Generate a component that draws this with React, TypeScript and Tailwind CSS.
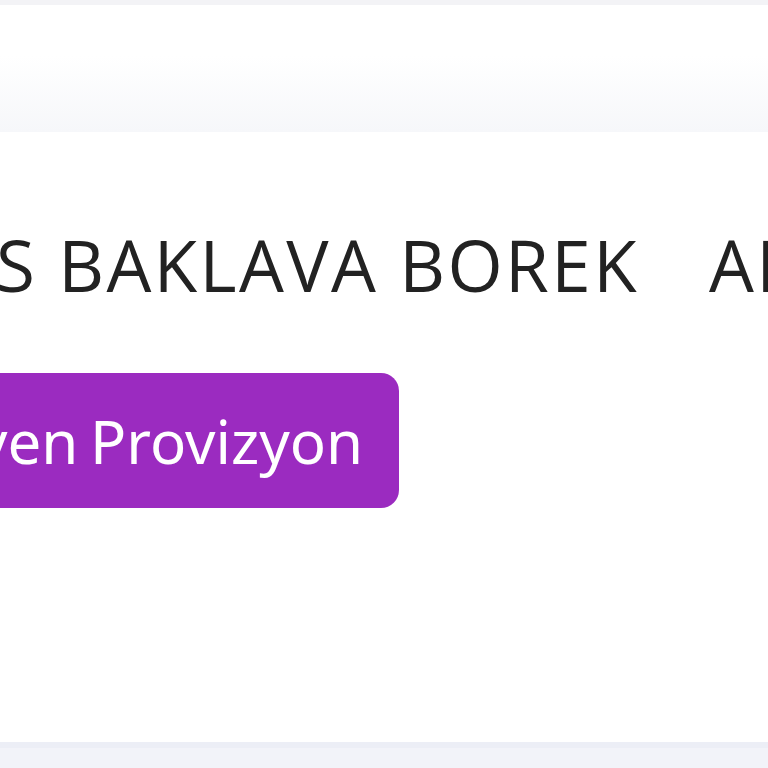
export default function App() {
  return (
    <div className="w-[768px] h-[768px] overflow-hidden bg-white flex flex-col" style={{ fontFamily: '"Open Sans", "Noto Sans", sans-serif' }}>
      {/* Header band */}
      <div className="h-[5px] bg-[#f3f3f6]" />
      <div className="h-[127px] bg-gradient-to-b from-white from-40% to-[#f6f7fa]" />

      {/* Title row */}
      <div className="mt-[97px] flex items-center whitespace-nowrap text-[71px] leading-none tracking-[2.4px] text-[#222222] ml-[-4px] gap-[70px]">
        <span>S BAKLAVA BOREK</span>
        <span>AI</span>
      </div>

      {/* Button */}
      <div className="mt-[73px] ml-[-40px]">
        <div className="inline-flex items-center h-[135px] w-[439px] rounded-[18px] bg-[#9b2bc0] text-white text-[60px] leading-none pl-[17px] whitespace-nowrap" style={{ fontFamily: '"Noto Sans", "Open Sans", sans-serif', wordSpacing: '-4px' }}>
          ven Provizyon
        </div>
      </div>

      <div className="flex-1" />
      {/* Footer band */}
      <div className="h-[6px] bg-[#eceef6]" />
      <div className="h-[20px] bg-[#f2f3f9]" />
    </div>
  )
}
